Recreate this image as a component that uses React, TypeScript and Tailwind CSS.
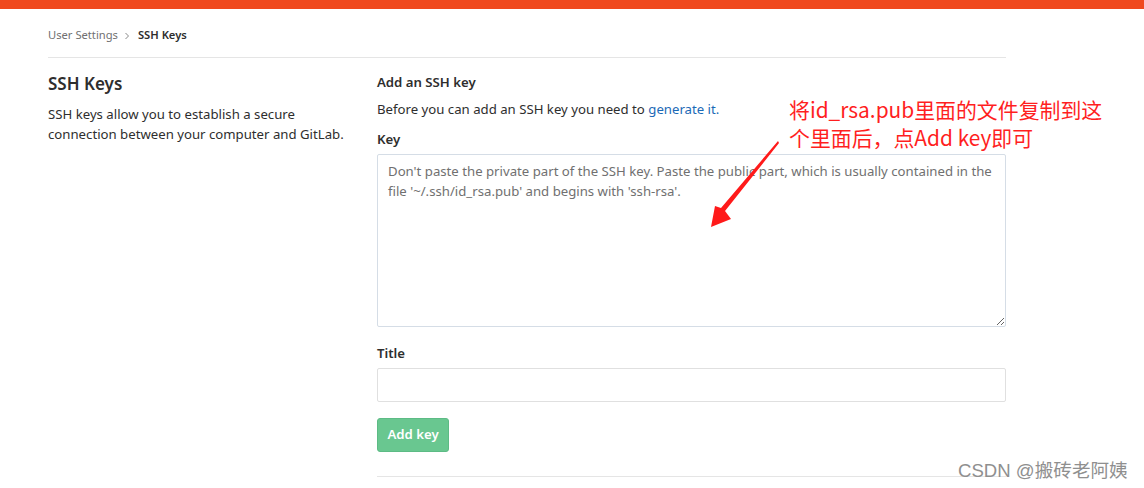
import React from "react";

export default function App() {
  const font = { fontFamily: '"Noto Sans", "Open Sans", sans-serif' };
  return (
    <div className="w-[1144px] h-[488px] bg-white relative overflow-hidden text-[#2e2e2e]" style={font}>
      <div className="h-[9px] bg-[#f0491e]" />
      <div className="pl-[48px] w-[1006px]">
        <div className="h-[49px] flex items-center text-[11.2px] pt-[5px] border-b border-[#e5e5e5]">
          <span className="text-[#707070]">User Settings</span>
          <svg width="12" height="12" viewBox="0 0 12 12" className="mx-[3px]">
            <path d="M4.5 3 L7.5 6 L4.5 9" fill="none" stroke="#8a8a8a" strokeWidth="1" />
          </svg>
          <span className="font-semibold text-[#2e2e2e] ml-[2px]">SSH Keys</span>
        </div>
        <div className="flex">
          <div className="w-[329px] pr-[30px] pt-[14px]">
            <h4 className="text-[17px] font-semibold leading-[24px] text-[#2e2e2e]">SSH Keys</h4>
            <p className="text-[13.2px] leading-[20px] mt-[8px] text-[#2e2e2e]">
              SSH keys allow you to establish a secure connection between your computer and GitLab.
            </p>
          </div>
          <div className="flex-1 pt-[14px]">
            <h5 className="text-[13.2px] font-semibold leading-[20px]">Add an SSH key</h5>
            <p className="text-[13.2px] leading-[20px] mt-[7px]">
              Before you can add an SSH key you need to <span className="text-[#1b69b6]">generate it.</span>
            </p>
            <label className="block text-[13.2px] font-semibold leading-[20px] mt-[10px]">Key</label>
            <textarea
              className="block w-full h-[173px] mt-[5px] border border-[#d5dde6] rounded-[2px] px-[10px] py-[6px] text-[13.2px] leading-[20px] placeholder:text-[#707070] outline-none resize-y"
              placeholder="Don't paste the private part of the SSH key. Paste the public part, which is usually contained in the file '~/.ssh/id_rsa.pub' and begins with 'ssh-rsa'."
            />
            <label className="block text-[13.2px] font-semibold leading-[20px] mt-[16px]">Title</label>
            <input className="block w-full h-[34px] mt-[5px] border border-[#e0e0e0] rounded-[2px] outline-none" />
            <button className="mt-[16px] h-[34px] w-[72px] rounded-[3px] bg-[#69c790] border border-[#5dbb85] text-white text-[13.2px] font-semibold">
              Add key
            </button>
            <div className="mt-[24px] border-t border-[#e5e5e5]" />
          </div>
        </div>
      </div>

      <div
        className="absolute left-[789px] top-[95px] text-[20.9px] leading-[28px] text-[#ff1f1f] w-[340px]"
        style={{ fontFamily: '"Noto Sans CJK SC", "Noto Sans", sans-serif' }}
      >
        将id_rsa.pub里面的文件复制到这<br />个里面后，点Add key即可
      </div>
      <svg className="absolute left-0 top-0" width="1144" height="488" viewBox="0 0 1144 488">
        <path d="M778 141 L779 143 L725 211 L731 219 L711 227 L715 206 L721 208 Z" fill="#ff1a1a" />
      </svg>
      <div
        className="absolute left-[958px] top-[457px] text-[18.6px] text-[#8f8f8f]"
        style={{ fontFamily: '"Liberation Sans", "Noto Sans CJK SC", sans-serif' }}
      >
        CSDN @搬砖老阿姨
      </div>
    </div>
  );
}
